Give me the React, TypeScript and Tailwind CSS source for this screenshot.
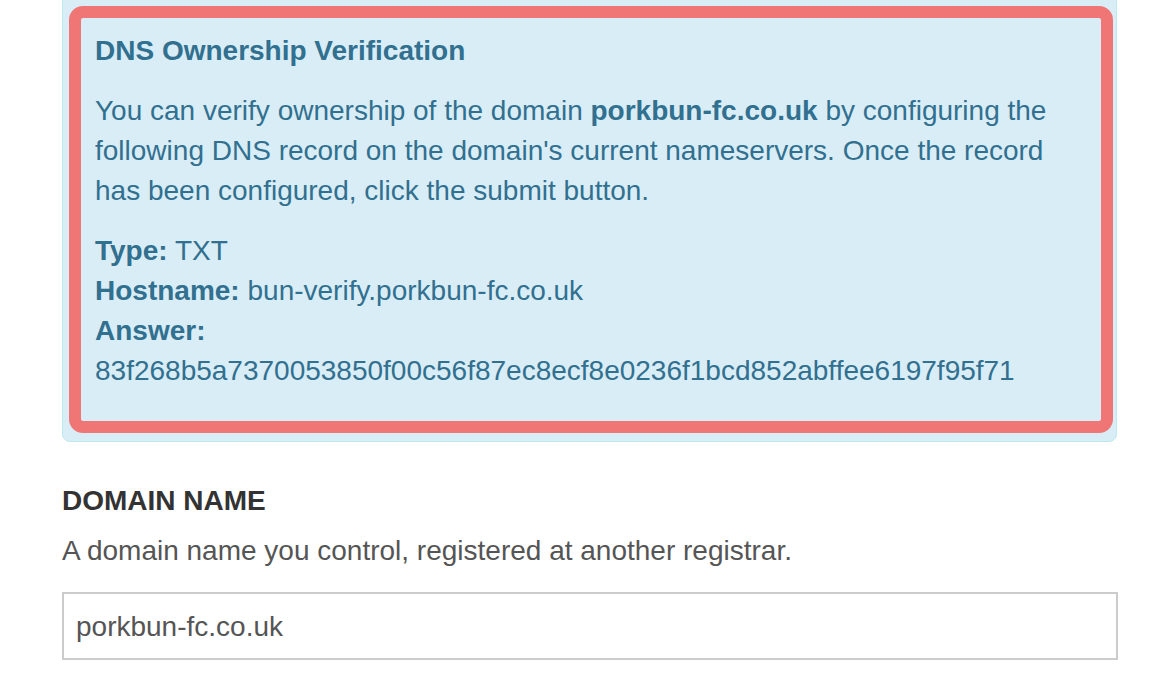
import React from "react";

export default function App() {
  return (
    <div
      className="w-[1172px] h-[694px] overflow-hidden bg-white"
      style={{ fontFamily: '"Liberation Sans", Arial, Helvetica, sans-serif' }}
    >
      <div className="ml-[62px] w-[1055px]">
        <div className="-mt-[20px] border border-[#bce8f1] bg-[#d9edf7] rounded-[8px] pt-[25px] pb-[8px] pl-[6px] pr-[3px]">
          <div className="border-[12px] border-[#f07575] rounded-[14px] pt-[13px] pb-[30px] pl-[14px] pr-[10px] text-[#31708f] text-[28px] leading-[40px]">
            <div className="font-bold">DNS Ownership Verification</div>
            <p className="mt-[20px]">
              You can verify ownership of the domain <b>porkbun-fc.co.uk</b> by configuring the
              <br />
              following DNS record on the domain's current nameservers. Once the record
              <br />
              has been configured, click the submit button.
            </p>
            <div className="mt-[20px]">
              <div>
                <b>Type:</b> TXT
              </div>
              <div>
                <b>Hostname:</b> bun-verify.porkbun-fc.co.uk
              </div>
              <div>
                <b>Answer:</b>
              </div>
              <div>83f268b5a7370053850f00c56f87ec8ecf8e0236f1bcd852abffee6197f95f71</div>
            </div>
          </div>
        </div>

        <div className="mt-[39px] text-[28px] leading-[40px]">
          <div className="font-bold text-[#333333]">DOMAIN NAME</div>
          <div className="mt-[10px] text-[#555555]">
            A domain name you control, registered at another registrar.
          </div>
          <div className="mt-[21px] h-[68px] w-[1056px] border-2 border-[#cccccc] flex items-center pl-[12px] pt-[2px] text-[#555555]">
            porkbun-fc.co.uk
          </div>
        </div>
      </div>
    </div>
  );
}
